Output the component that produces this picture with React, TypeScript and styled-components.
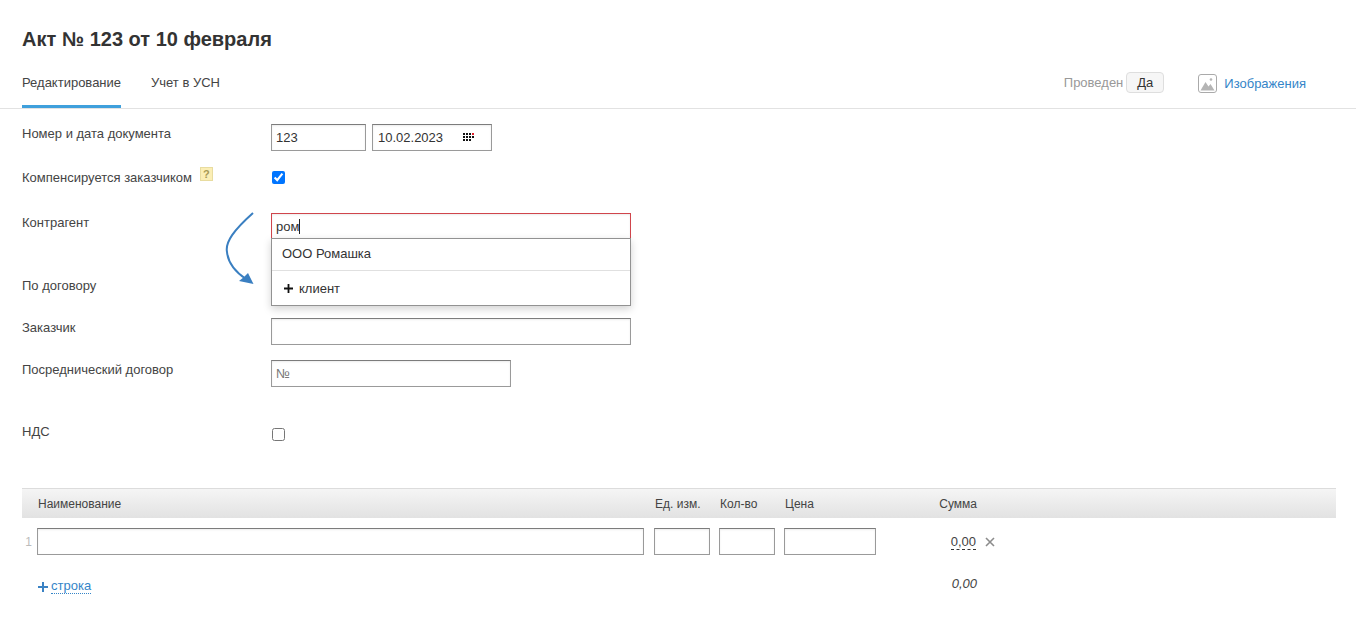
import React from "react";
import styled, { createGlobalStyle } from "styled-components";

const Global = createGlobalStyle`
  html, body { margin: 0; padding: 0; background: #fff; }
  body { font-family: "Liberation Sans", Arial, sans-serif; font-size: 13px; color: #333; }
`;

const Page = styled.div`
  width: 1356px;
  height: 625px;
  overflow: hidden;
  position: relative;
`;

const Title = styled.h1`
  margin: 0;
  padding: 28px 0 0 22px;
  font-size: 20px;
  line-height: 23px;
  font-weight: bold;
  color: #333;
`;

const TabBar = styled.div`
  display: flex;
  align-items: flex-start;
  margin-top: 21px;
  height: 36px;
  padding-left: 22px;
  border-bottom: 1px solid #e2e2e2;
`;

const Tab = styled.div<{ $active?: boolean }>`
  height: 34px;
  box-sizing: border-box;
  margin-top: 2px;
  margin-right: 30px;
  font-size: 13px;
  line-height: 17px;
  color: #444;
  border-bottom: ${(p) => (p.$active ? "3px solid #3fa0dc" : "none")};
`;

const Status = styled.div`
  margin-left: auto;
  display: flex;
  align-items: center;
  height: 21px;
  padding-right: 50px;
`;

const StatusLabel = styled.span`
  font-size: 13px;
  color: #999;
  margin-right: 3px;
`;

const StatusButton = styled.span`
  display: inline-flex;
  align-items: center;
  justify-content: center;
  width: 38px;
  height: 21px;
  box-sizing: border-box;
  background: #f6f6f6;
  border: 1px solid #dedede;
  border-radius: 4px;
  font-size: 13px;
  color: #333;
`;

const ImagesLink = styled.a`
  display: inline-flex;
  align-items: center;
  margin-left: 34px;
  margin-top: 2px;
  font-size: 13px;
  color: #3585c8;
  svg { margin-right: 7px; }
`;

const Form = styled.div`
  padding-left: 22px;
`;

const Row = styled.div<{ $top: number; $height: number }>`
  display: grid;
  grid-template-columns: 249px 1fr;
  margin-top: ${(p) => p.$top}px;
  height: ${(p) => p.$height}px;
`;

const Label = styled.div<{ $offset?: number }>`
  padding-top: ${(p) => p.$offset ?? 2}px;
  font-size: 13px;
  line-height: 15px;
  color: #444;
  display: flex;
  align-items: flex-start;
`;

const Help = styled.span`
  display: inline-block;
  width: 13px;
  height: 14px;
  margin-left: 8px;
  margin-top: -3px;
  box-sizing: border-box;
  background: #fbeeb5;
  border: 1px solid #e8dca0;
  font-size: 11px;
  line-height: 12px;
  font-weight: bold;
  text-align: center;
  color: #a89a55;
`;

const Field = styled.div`
  display: flex;
  gap: 6px;
  align-items: flex-start;
  position: relative;
`;

const Box = styled.div<{ $w: number; $error?: boolean }>`
  width: ${(p) => p.$w}px;
  height: 27px;
  box-sizing: border-box;
  display: flex;
  align-items: center;
  padding-left: 4px;
  background: #fff;
  font-size: 13px;
  color: #333;
  border: 1px solid ${(p) => (p.$error ? "#d0454c" : "#9a9a9a")};
  border-top-color: ${(p) => (p.$error ? "#d0454c" : "#7c7c7c")};
  box-shadow: inset 0 1px 2px rgba(0, 0, 0, 0.08);
  position: relative;
`;

const DateText = styled.span`
  margin-left: 1px;
`;

const Placeholder = styled.span`
  color: #777;
`;

const Caret = styled.span`
  display: inline-block;
  width: 1px;
  height: 15px;
  background: #222;
`;

const CalendarIcon = styled.svg`
  position: absolute;
  left: 90px;
  top: 8px;
`;

const Check = styled.input`
  margin: 0 0 0 1px;
  width: 13px;
  height: 13px;
  accent-color: #0075ff;
`;

const CheckCell = styled.div<{ $top: number }>`
  padding-top: ${(p) => p.$top}px;
  display: flex;
  line-height: 0;
`;

const Menu = styled.div`
  position: absolute;
  left: 0;
  top: 25px;
  width: 360px;
  height: 68px;
  box-sizing: border-box;
  background: #fff;
  border: 1px solid #929292;
  box-shadow: 0 3px 8px rgba(0, 0, 0, 0.18);
  z-index: 2;
`;

const MenuItem = styled.div`
  height: 32px;
  box-sizing: border-box;
  padding: 7px 0 0 10px;
  font-size: 13px;
  line-height: 15px;
  color: #333;
  border-bottom: 1px solid #e0e0e0;
`;

const MenuAdd = styled.div`
  display: flex;
  align-items: center;
  gap: 5px;
  padding: 10px 0 0 11px;
  font-size: 13px;
  line-height: 15px;
  color: #333;
`;

const Arrow = styled.svg`
  position: absolute;
  left: 220px;
  top: 208px;
  z-index: 1;
`;

const Table = styled.div`
  margin: 48px 20px 0 22px;
`;

const Columns = "15px 617px 65px 65px 92px 101px 1fr";

const Head = styled.div`
  display: grid;
  grid-template-columns: ${Columns};
  height: 30px;
  box-sizing: border-box;
  align-items: center;
  background: linear-gradient(#f5f5f5, #e2e2e2);
  border-top: 1px solid #dcdcdc;
  font-size: 12px;
  color: #444;
`;

const HeadCell = styled.div<{ $col: number; $right?: boolean }>`
  grid-column: ${(p) => p.$col};
  padding-left: 1px;
  ${(p) => p.$right && "text-align: right;"}
`;

const Line = styled.div`
  display: grid;
  grid-template-columns: ${Columns};
  margin-top: 10px;
  height: 27px;
  align-items: center;
`;

const LineNo = styled.div`
  font-size: 12px;
  color: #bbb;
  text-align: right;
  padding-right: 5px;
  margin-left: -5px;
`;

const SumCell = styled.div`
  text-align: right;
  font-size: 13px;
  padding-right: 1px;
`;

const Sum = styled.span`
  border-bottom: 1px dashed #333;
  color: #444;
  line-height: 15px;
  display: inline-block;
`;

const Remove = styled.svg`
  margin-left: 8px;
`;

const RemoveCell = styled.div`
  display: flex;
  align-items: center;
`;

const Footer = styled.div`
  display: grid;
  grid-template-columns: 15px 940px 1fr;
  margin-top: 21px;
  align-items: start;
`;

const AddLine = styled.div`
  grid-column: 2;
  grid-row: 1;
  display: flex;
  align-items: center;
  gap: 3px;
  padding-top: 3px;
  padding-left: 1px;
`;

const AddText = styled.span`
  font-size: 13px;
  line-height: 14px;
  color: #3585c8;
  border-bottom: 1px dotted #3585c8;
`;

const Total = styled.div`
  grid-column: 1 / 3;
  grid-row: 1;
  text-align: right;
  font-size: 13px;
  line-height: 15px;
  font-style: italic;
  color: #444;
`;

const dots: [number, number, string][] = [
  [0, 0, "#111"], [3, 0, "#111"], [6, 0, "#111"], [9, 0, "#e0202a"],
  [0, 3, "#111"], [3, 3, "#111"], [6, 3, "#111"], [9, 3, "#111"],
  [0, 6, "#111"], [3, 6, "#111"], [6, 6, "#111"],
];

export default function App() {
  return (
    <Page>
      <Global />
      <Title>Акт № 123 от 10 февраля</Title>
      <TabBar>
        <Tab $active>Редактирование</Tab>
        <Tab>Учет в УСН</Tab>
        <Status>
          <StatusLabel>Проведен</StatusLabel>
          <StatusButton>Да</StatusButton>
          <ImagesLink>
            <svg width="19" height="19" viewBox="0 0 19 19">
              <rect x="0.5" y="0.5" width="18" height="18" rx="2.5" fill="#fff" stroke="#aaa" />
              <path d="M2.5 16.5 L7.5 8 L10.5 12.5 L12.5 10 L16.5 16.5 Z" fill="#b5b5b5" />
              <circle cx="13" cy="5.5" r="1.3" fill="#b5b5b5" />
            </svg>
            Изображения
          </ImagesLink>
        </Status>
      </TabBar>
      <Form>
        <Row $top={15} $height={27}>
          <Label>Номер и дата документа</Label>
          <Field>
            <Box $w={95}>123</Box>
            <Box $w={120}>
              <DateText>10.02.2023</DateText>
              <CalendarIcon width="11" height="8" viewBox="0 0 11 8">
                {dots.map(([x, y, c]) => (
                  <rect key={`${x}-${y}`} x={x} y={y} width="2" height="2" fill={c} />
                ))}
              </CalendarIcon>
            </Box>
          </Field>
        </Row>
        <Row $top={19} $height={14}>
          <Label $offset={0}>
            Компенсируется заказчиком
            <Help>?</Help>
          </Label>
          <CheckCell $top={1}>
            <Check type="checkbox" defaultChecked />
          </CheckCell>
        </Row>
        <Row $top={29} $height={27}>
          <Label>Контрагент</Label>
          <Field>
            <Box $w={360} $error>ром<Caret /></Box>
            <Menu>
              <MenuItem>ООО Ромашка</MenuItem>
              <MenuAdd>
                <svg width="11" height="11" viewBox="0 0 11 11">
                  <path d="M5.5 1 V10 M1 5.5 H10" stroke="#111" strokeWidth="1.8" />
                </svg>
                клиент
              </MenuAdd>
            </Menu>
          </Field>
        </Row>
        <Row $top={38} $height={15}>
          <Label $offset={0}>По договору</Label>
          <div />
        </Row>
        <Row $top={25} $height={27}>
          <Label>Заказчик</Label>
          <Field><Box $w={360} /></Field>
        </Row>
        <Row $top={15} $height={27}>
          <Label>Посреднический договор</Label>
          <Field><Box $w={240}><Placeholder>№</Placeholder></Box></Field>
        </Row>
        <Row $top={37} $height={16}>
          <Label $offset={0}>НДС</Label>
          <CheckCell $top={4}>
            <Check type="checkbox" />
          </CheckCell>
        </Row>
      </Form>
      <Arrow width="40" height="85" viewBox="0 0 40 85">
        <path d="M33 5 C 14 22, 5 34, 7 44 C 8 54, 14 63, 26 71" fill="none" stroke="#3a7fc1" strokeWidth="2" />
        <path d="M33.5 76 L19 73 L24 69 L28 65 Z" fill="#3a7fc1" />
      </Arrow>
      <Table>
        <Head>
          <HeadCell $col={2}>Наименование</HeadCell>
          <HeadCell $col={3}>Ед. изм.</HeadCell>
          <HeadCell $col={4}>Кол-во</HeadCell>
          <HeadCell $col={5}>Цена</HeadCell>
          <HeadCell $col={6} $right>Сумма</HeadCell>
        </Head>
        <Line>
          <LineNo>1</LineNo>
          <div><Box $w={607} /></div>
          <div><Box $w={56} /></div>
          <div><Box $w={56} /></div>
          <div><Box $w={92} /></div>
          <SumCell><Sum>0,00</Sum></SumCell>
          <RemoveCell>
            <Remove width="10" height="10" viewBox="0 0 10 10">
              <path d="M1 1 L9 9 M9 1 L1 9" stroke="#8c8c8c" strokeWidth="1.6" />
            </Remove>
          </RemoveCell>
        </Line>
        <Footer>
          <Total>0,00</Total>
          <AddLine>
            <svg width="10" height="10" viewBox="0 0 10 10">
              <path d="M5 0 V10 M0 5 H10" stroke="#3a82c4" strokeWidth="2" />
            </svg>
            <AddText>строка</AddText>
          </AddLine>
        </Footer>
      </Table>
    </Page>
  );
}
